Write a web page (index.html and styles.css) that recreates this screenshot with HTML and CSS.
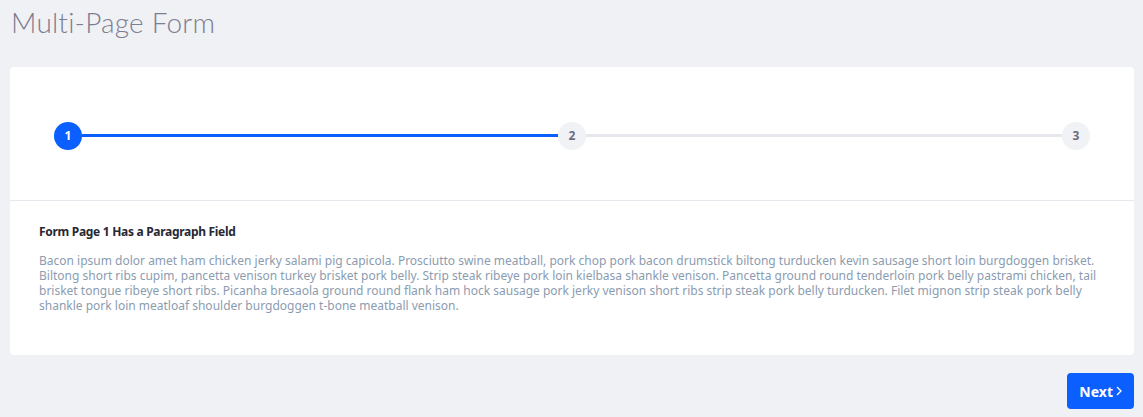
FILE: index.html
```html
<!DOCTYPE html>
<html lang="en">
<head>
<meta charset="utf-8">
<title>Multi-Page Form</title>
<link rel="stylesheet" href="styles.css">
</head>
<body>
<div class="page">
  <h1 class="title">Multi-Page Form</h1>
  <div class="card">
    <div class="stepper">
      <div class="step done">1</div>
      <div class="bar active"></div>
      <div class="step">2</div>
      <div class="bar"></div>
      <div class="step">3</div>
    </div>
    <div class="card-body">
      <h2 class="field-title">Form Page 1 Has a Paragraph Field</h2>
      <p class="para">Bacon ipsum dolor amet ham chicken jerky salami pig capicola. Prosciutto swine meatball, pork chop pork bacon drumstick biltong turducken kevin sausage short loin burgdoggen brisket. Biltong short ribs cupim, pancetta venison turkey brisket pork belly. Strip steak ribeye pork loin kielbasa shankle venison. Pancetta ground round tenderloin pork belly pastrami chicken, tail brisket tongue ribeye short ribs. Picanha bresaola ground round flank ham hock sausage pork jerky venison short ribs strip steak pork belly turducken. Filet mignon strip steak pork belly shankle pork loin meatloaf shoulder burgdoggen t-bone meatball venison.</p>
    </div>
  </div>
  <div class="actions">
    <button class="btn-next">Next<svg class="chev" width="6" height="10" viewBox="0 0 6 10"><path d="M1 1l4 4-4 4" fill="none" stroke="#fff" stroke-width="1.3"/></svg></button>
  </div>
</div>
</body>
</html>
```
FILE: styles.css
```css
html, body {
  margin: 0;
  padding: 0;
  background: #f0f1f5;
}
body {
  font-family: "Noto Sans", "Open Sans", sans-serif;
}
.page {
  padding: 0 9px 0 10px;
}
.title {
  margin: 0;
  padding: 4px 0 0 1px;
  height: 67px;
  box-sizing: border-box;
  font-family: Lato, sans-serif;
  font-weight: 300;
  font-size: 28px;
  letter-spacing: 0.2px;
  line-height: 36px;
  color: #7d7e90;
}
.card {
  background: #fff;
  border-radius: 4px;
}
.stepper {
  display: flex;
  align-items: center;
  height: 134px;
  box-sizing: border-box;
  padding: 4px 44px 0;
  border-bottom: 1px solid #e7e7ed;
}
.step {
  width: 28px;
  height: 28px;
  border-radius: 50%;
  background: #f1f2f5;
  color: #6b6c7e;
  font-size: 12px;
  font-weight: 700;
  display: flex;
  align-items: center;
  justify-content: center;
  flex: none;
}
.step.done {
  background: #0b5fff;
  color: #fff;
}
.bar {
  flex: 1;
  height: 3px;
  background: #e7e7ed;
}
.bar.active {
  background: #0b5fff;
}
.card-body {
  padding: 22px 29px 42px;
}
.field-title {
  margin: 0 0 12px;
  font-size: 12px;
  font-weight: 700;
  letter-spacing: -0.3px;
  line-height: 18px;
  color: #272833;
}
.para {
  margin: 0;
  font-size: 12px;
  line-height: 15px;
  color: #8b9cb0;
}
.actions {
  display: flex;
  justify-content: flex-end;
  padding-top: 18px;
}
.btn-next {
  display: flex;
  align-items: center;
  gap: 3px;
  height: 36px;
  padding: 0 12px 0 12px;
  border: none;
  border-radius: 4px;
  background: #0b5fff;
  color: #fff;
  font-family: "Noto Sans", sans-serif;
  font-size: 14px;
  font-weight: 700;
}
.chev {
  display: block;
}
```
